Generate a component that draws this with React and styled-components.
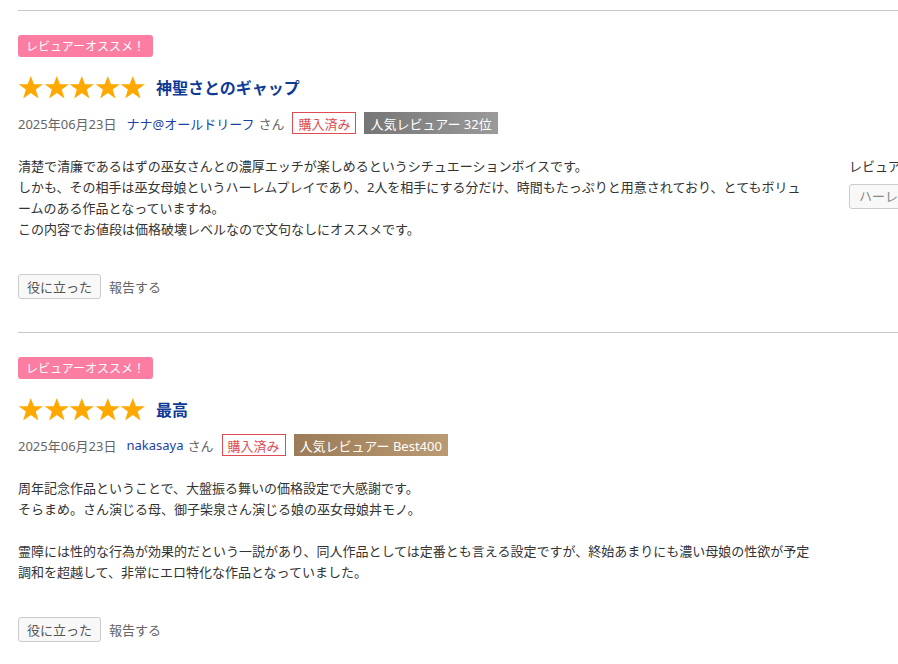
import React from "react";
import styled, { createGlobalStyle } from "styled-components";

const GlobalStyle = createGlobalStyle`
  html, body {
    margin: 0;
    padding: 0;
    background: #fff;
    overflow: hidden;
  }
  body {
    font-family: "Noto Sans", "Noto Sans CJK JP", sans-serif;
    color: #333;
  }
`;

const reviews = [
  {
    title: "神聖さとのギャップ",
    date: "2025年06月23日",
    name: "ナナ@オールドリーフ",
    rank: "人気レビュアー 32位",
    rankTone: "gray",
    paragraphs: [
      "清楚で清廉であるはずの巫女さんとの濃厚エッチが楽しめるというシチュエーションボイスです。",
      "しかも、その相手は巫女母娘というハーレムプレイであり、2人を相手にする分だけ、時間もたっぷりと用意されており、とてもボリュームのある作品となっていますね。",
      "この内容でお値段は価格破壊レベルなので文句なしにオススメです。",
    ],
    aside: true,
  },
  {
    title: "最高",
    date: "2025年06月23日",
    name: "nakasaya",
    rank: "人気レビュアー Best400",
    rankTone: "brown",
    paragraphs: [
      "周年記念作品ということで、大盤振る舞いの価格設定で大感謝です。",
      "そらまめ。さん演じる母、御子柴泉さん演じる娘の巫女母娘丼モノ。",
      "",
      "霊障には性的な行為が効果的だという一説があり、同人作品としては定番とも言える設定ですが、終始あまりにも濃い母娘の性欲が予定調和を超越して、非常にエロ特化な作品となっていました。",
    ],
    aside: false,
  },
];

const Page = styled.div`
  width: 1100px;
  padding: 10px 0 0 18px;
`;

const Review = styled.section`
  border-top: 1px solid #c8c8c8;
  padding: 24px 0 33px;
`;

const RecommendBadge = styled.div`
  display: flex;
  align-items: center;
  width: fit-content;
  height: 22px;
  padding: 0 8px;
  border-radius: 3px;
  background: #fb7ea2;
  color: #fff;
  font-size: 12px;
`;

const TitleRow = styled.div`
  display: flex;
  align-items: center;
  gap: 10px;
  margin-top: 17px;
  height: 26px;
`;

const Stars = styled.div`
  display: flex;
`;

const StarSvg = styled.svg`
  width: 25.6px;
  height: 25px;
  display: block;
`;

const Title = styled.h3`
  margin: 0;
  font-size: 16px;
  font-weight: bold;
  color: #0f3a96;
`;

const Meta = styled.div`
  display: flex;
  align-items: center;
  height: 22px;
  margin-top: 12px;
  font-size: 13px;
  color: #666;
`;

const Reviewer = styled.span`
  margin-left: 10px;
  color: #1a3fa8;
`;

const San = styled.span`
  margin-left: 4px;
  color: #666;
`;

const Purchased = styled.span`
  display: inline-flex;
  align-items: center;
  height: 20px;
  margin-left: 8px;
  padding: 0 5px;
  border: 1px solid #de4b52;
  color: #de4b52;
  font-size: 13px;
  background: #fff;
`;

const RankBadge = styled.span`
  display: inline-flex;
  align-items: center;
  height: 22px;
  margin-left: 8px;
  padding: 0 6px;
  color: #fff;
  font-size: 13px;
  background: ${(p) =>
    p.$tone === "brown"
      ? "linear-gradient(to right, #9c7c58, #ba9a72)"
      : "linear-gradient(to right, #767676, #9a9a9a)"};
`;

const Content = styled.div`
  display: flex;
  gap: 36px;
  margin-top: 22px;
`;

const Body = styled.div`
  width: 795px;
  font-size: 13px;
  line-height: 21px;
  color: #333;
`;

const Line = styled.p`
  margin: 0;
  min-height: 21px;
`;

const Aside = styled.div`
  font-size: 13px;
  line-height: 21px;
  color: #333;
`;

const TagButton = styled.span`
  display: inline-flex;
  align-items: center;
  height: 23px;
  margin-top: 7px;
  padding: 0 9px;
  border: 1px solid #ccc;
  border-radius: 3px;
  background: #f8f8f8;
  color: #888;
  font-size: 13px;
`;

const Actions = styled.div`
  display: flex;
  align-items: center;
  gap: 8px;
  margin-top: 34px;
`;

const HelpfulButton = styled.button`
  height: 25px;
  padding: 0 8px;
  border: 1px solid #ccc;
  border-radius: 3px;
  background: #f8f8f8;
  color: #555;
  font-family: inherit;
  font-size: 13px;
`;

const ReportLink = styled.span`
  font-size: 13px;
  color: #666;
`;

const Star = () => (
  <StarSvg viewBox="0 0 26 25">
    <polygon
      points="13,0.8 16.2,9.2 25.4,9.2 18,14.6 20.8,23.6 13,18.2 5.2,23.6 8,14.6 0.6,9.2 9.8,9.2"
      fill="#ffa800"
    />
  </StarSvg>
);

const App = () => {
  return (
    <>
      <GlobalStyle />
      <Page>
        {reviews.map((r, i) => (
          <Review key={i}>
            <RecommendBadge>レビュアーオススメ！</RecommendBadge>
            <TitleRow>
              <Stars>
                {[0, 1, 2, 3, 4].map((s) => (
                  <Star key={s} />
                ))}
              </Stars>
              <Title>{r.title}</Title>
            </TitleRow>
            <Meta>
              <span>{r.date}</span>
              <Reviewer>{r.name}</Reviewer>
              <San>さん</San>
              <Purchased>購入済み</Purchased>
              <RankBadge $tone={r.rankTone}>{r.rank}</RankBadge>
            </Meta>
            <Content>
              <Body>
                {r.paragraphs.map((t, j) => (
                  <Line key={j}>{t}</Line>
                ))}
              </Body>
              {r.aside && (
                <Aside>
                  <div>レビュアーが選んだジャンル</div>
                  <TagButton>ハーレム</TagButton>
                </Aside>
              )}
            </Content>
            <Actions>
              <HelpfulButton>役に立った</HelpfulButton>
              <ReportLink>報告する</ReportLink>
            </Actions>
          </Review>
        ))}
      </Page>
    </>
  );
};

export default App;
